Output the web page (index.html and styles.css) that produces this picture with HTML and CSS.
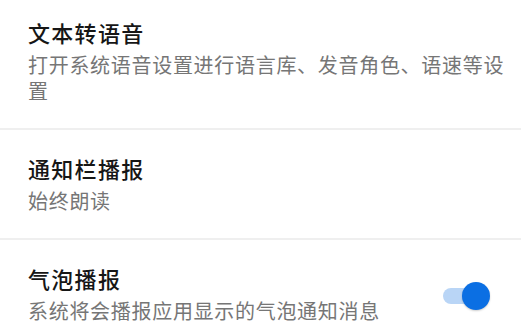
FILE: index.html
```html
<!DOCTYPE html>
<html lang="zh-CN">
<head>
<meta charset="utf-8">
<title>语音设置</title>
<link rel="stylesheet" href="styles.css">
</head>
<body>
<div class="list">
  <div class="item item-first">
    <div class="text">
      <div class="title">文本转语音</div>
      <div class="desc">打开系统语音设置进行语言库、发音角色、语速等设置</div>
    </div>
  </div>
  <div class="item">
    <div class="text">
      <div class="title">通知栏播报</div>
      <div class="desc">始终朗读</div>
    </div>
  </div>
  <div class="item item-last">
    <div class="text">
      <div class="title">气泡播报</div>
      <div class="desc">系统将会播报应用显示的气泡通知消息</div>
    </div>
    <div class="switch on"><span class="track"></span><span class="thumb"></span></div>
  </div>
</div>
</body>
</html>
```

FILE: styles.css
```css
html, body {
  margin: 0;
  padding: 0;
  background: #ffffff;
}
body {
  width: 521px;
  height: 329px;
  overflow: hidden;
  font-family: "Noto Sans CJK SC", "Noto Sans", sans-serif;
}
.list {
  display: flex;
  flex-direction: column;
}
.item {
  display: flex;
  align-items: center;
  padding: 22px 16px 24px 28px;
  border-bottom: 2px solid #efefef;
}
.item-first {
  padding-top: 16px;
}
.item-last {
  border-bottom: none;
  padding-right: 31px;
}
.text {
  flex: 1;
  min-width: 0;
}
.title {
  font-size: 22px;
  line-height: 32px;
  letter-spacing: 1.3px;
  font-weight: 500;
  color: #161616;
}
.desc {
  margin-top: 4px;
  font-size: 20px;
  line-height: 26px;
  letter-spacing: 0.7px;
  color: #767676;
}
.switch {
  position: relative;
  width: 48px;
  height: 28px;
  flex: none;
  margin-top: 6px;
}
.switch .track {
  position: absolute;
  left: 1px;
  top: 6px;
  width: 44px;
  height: 16px;
  border-radius: 8px;
  background: #b9d5f6;
}
.switch .thumb {
  position: absolute;
  right: 0;
  top: 0;
  width: 28px;
  height: 28px;
  border-radius: 50%;
  background: #0b6fe3;
  box-shadow: 0 1px 2px rgba(0, 0, 0, 0.2);
}
```
